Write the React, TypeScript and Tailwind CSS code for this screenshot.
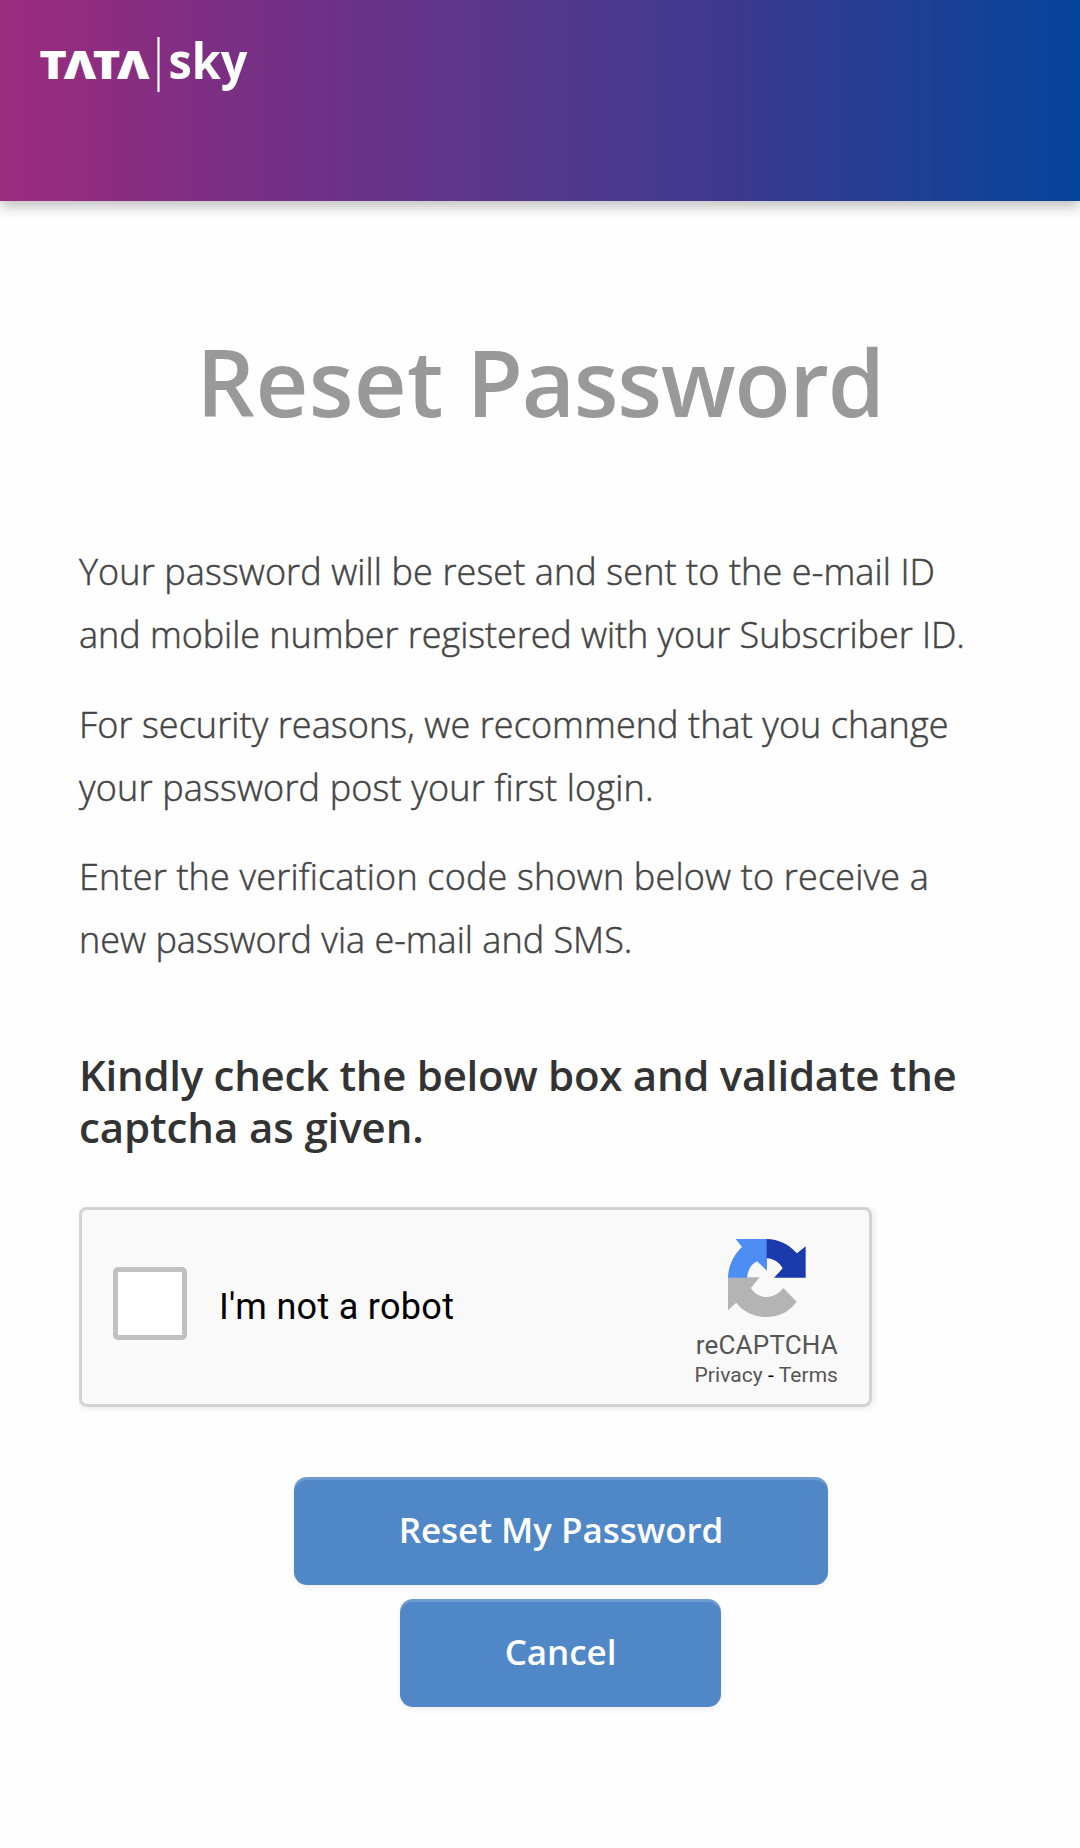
function Logo() {
  return (
    <svg className="block h-[90px] w-[236px]" viewBox="37 25 236 90" fill="#fff" role="img" aria-label="TATA sky">
      <text transform="scale(1.2 1)" x="32.8 53.1 77.2 97.5" y="79" fontFamily="Open Sans" fontWeight="800" fontSize="39">
        TΛTΛ
      </text>
      <rect x="157.4" y="37" width="2.2" height="55" />
      <text x="168.5" y="79" fontFamily="Open Sans" fontWeight="700" fontSize="50" textLength="79" lengthAdjust="spacingAndGlyphs">
        sky
      </text>
    </svg>
  );
}

function RecaptchaIcon() {
  return (
    <svg className="block h-[80px] w-[80px]" viewBox="202 145 240 240">
      <path fill="#b4b4b4" d="M205 263H300L274 295C284 312 302 322 321 322C342 322 358 311 371 295L411 336C390 366 357 382 321 382C285 382 252 368 230 339L205 362Z" />
      <path fill="#4d8ef5" d="M228 148H322V243L292 215C276 222 264 240 262 264H205C206 228 222 195 247 172Z" />
      <path fill="#1b3aac" d="M321 148C355 148 388 164 412 191L438 170V264H343L369 236C358 217 342 207 321 206Z" />
    </svg>
  );
}

function Captcha() {
  return (
    <div className="h-[205px] w-[798px] overflow-hidden">
      <div className="flex h-[200px] w-[793px] rounded-[8px] border-[3px] border-[#d3d3d3] bg-[#f9f9f9] font-[Roboto,sans-serif] shadow-[0_0_10px_2px_rgba(0,0,0,0.08)]">
        <div className="mt-[57px] ml-[31px] h-[73px] w-[74px] rounded-[5px] border-[5px] border-[#c1c1c1] bg-white" />
        <div className="mt-[76px] ml-[32px] text-[36px] leading-[42px] tracking-[0.3px] text-black">I'm not a robot</div>
        <div className="mt-[28px] mr-[31px] ml-auto flex flex-col items-end">
          <div className="mr-[31px]">
            <RecaptchaIcon />
          </div>
          <div className="mt-[12px] text-[26px] leading-[30px] tracking-[0.2px] whitespace-nowrap text-[#555]">reCAPTCHA</div>
          <div className="mt-[3px] text-[21px] leading-[24px] tracking-[0.05px] whitespace-nowrap text-[#555]">
            Privacy <span className="text-black">-</span> Terms
          </div>
        </div>
      </div>
    </div>
  );
}

const button =
  "flex h-[108px] items-center justify-center rounded-[13px] bg-[#4f87c7] pb-[1px] text-[35px] font-semibold tracking-[-0.05px] text-white shadow-[inset_0_3px_0_rgba(255,255,255,0.18),0_3px_6px_rgba(0,0,0,0.06)]";

export default function App() {
  return (
    <div className="h-[1848px] w-[1080px] overflow-hidden bg-[#fefefe] font-['Open_Sans',sans-serif]">
      <header className="h-[201px] bg-[linear-gradient(90deg,#9b2b7c_0%,#6d3187_30%,#53388b_50%,#3e398e_67%,#1c4095_87%,#04449a_100%)] px-[37px] pt-[25px] shadow-[0_6px_12px_rgba(0,0,0,0.24)]">
        <Logo />
      </header>
      <main className="px-[79px] pt-[131px]">
        <h1 className="text-center text-[92px] leading-[100px] font-semibold tracking-[-1.3px] whitespace-nowrap text-[#999]">
          <span className="tracking-[0.3px]">Reset</span> Password
        </h1>
        <div className="mt-[108px] flex flex-col gap-[26.5px] text-[36px] leading-[63px] font-light whitespace-nowrap text-[#444] [-webkit-text-stroke:0.5px_#444]">
          <p>
            <span className="tracking-[0.11px]">Your password will be reset and sent to the e-mail ID</span>
            <br />
            <span className="tracking-[-0.05px]">and mobile number registered with your Subscriber ID.</span>
          </p>
          <p>
            <span className="tracking-[0.09px]">For security reasons, we recommend that you change</span>
            <br />
            <span className="tracking-[0.18px]">your password post your first login.</span>
          </p>
          <p>
            <span className="tracking-[0.18px]">Enter the verification code shown below to receive a</span>
            <br />
            <span>new password via e-mail and SMS.</span>
          </p>
        </div>
        <h2 className="mt-[78px] mb-[54px] text-[42px] leading-[52px] font-semibold whitespace-nowrap text-[#333]">
          <span className="tracking-[-0.27px]">Kindly check the below box and validate the</span>
          <br />
          <span className="tracking-[-0.1px]">captcha as given.</span>
        </h2>
        <Captcha />
        <div className="mt-[65px] ml-[215px] flex w-[534px] flex-col items-center gap-[14px]">
          <button className={button + " w-[534px]"}>Reset My Password</button>
          <button className={button + " mr-[1px] w-[321px]"}>Cancel</button>
        </div>
      </main>
    </div>
  );
}
